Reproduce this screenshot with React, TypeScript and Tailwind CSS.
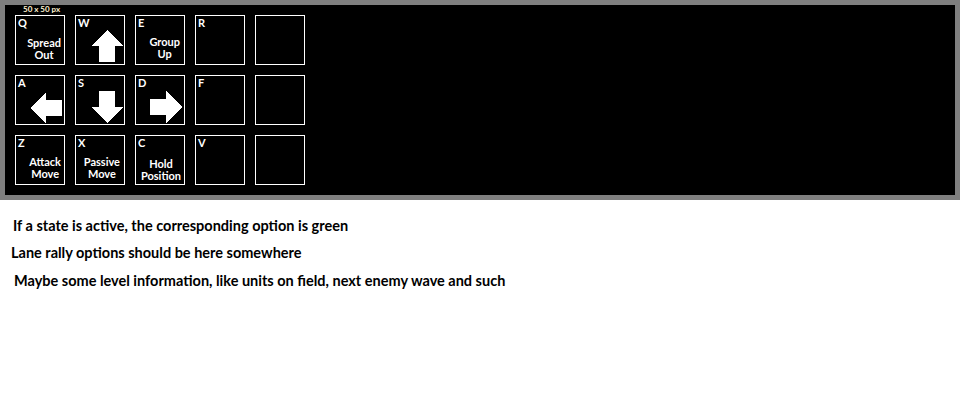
import React from 'react';

type Cell = {
  key: string;
  label?: string[];
  arrow?: 'up' | 'down' | 'left' | 'right';
  // spacing of the label block inside the cell
  pad?: string;
};

const rows: Cell[][] = [
  [
    { key: 'Q', label: ['Spread', 'Out'], pad: 'pr-[3px] pb-[3px]' },
    { key: 'W', arrow: 'up' },
    { key: 'E', label: ['Group', 'Up'], pad: 'pr-[4px] pb-[4px]' },
    { key: 'R' },
    { key: '' },
  ],
  [
    { key: 'A', arrow: 'left' },
    { key: 'S', arrow: 'down' },
    { key: 'D', arrow: 'right' },
    { key: 'F' },
    { key: '' },
  ],
  [
    { key: 'Z', label: ['Attack', 'Move'], pad: 'pr-[3px] pb-[4px]' },
    { key: 'X', label: ['Passive', 'Move'], pad: 'pr-[4px] pb-[4px]' },
    { key: 'C', label: ['Hold', 'Position'], pad: 'pr-[3px] pb-[2px]' },
    { key: 'V' },
    { key: '' },
  ],
];

// arrows are 32x32 blocks, drawn crisp like the mockup
const arrowPaths: Record<string, string> = {
  up: 'M16 0 L32 16 L24 16 L24 32 L8 32 L8 16 L0 16 Z',
  down: 'M8 0 L24 0 L24 16 L32 16 L16 32 L0 16 L8 16 Z',
  left: 'M0 16 L16 0 L16 8 L32 8 L32 24 L16 24 L16 32 Z',
  right: 'M0 8 L16 8 L16 0 L32 16 L16 32 L16 24 L0 24 Z',
};

const Arrow = ({ dir }: { dir: string }) => (
  <svg width="32" height="32" viewBox="0 0 32 32" shapeRendering="crispEdges">
    <path d={arrowPaths[dir]} fill="#fff" />
  </svg>
);

const arrowPad: Record<string, string> = {
  up: 'pl-[15px] pt-[3px]',
  down: 'pl-[15px] pt-[4px]',
  left: 'pl-[14px] pt-[5px]',
  right: 'pl-[14px] pt-[4px]',
};

const KeyCell = ({ cell }: { cell: Cell }) => (
  <div className="w-[50px] h-[50px] border border-white flex flex-col">
    <div className="h-[11px] pl-[2px] pt-[1px] text-[11px] font-bold leading-[11px] text-white">
      {cell.key}
    </div>
    {cell.arrow && (
      <div className={arrowPad[cell.arrow]}>
        <Arrow dir={cell.arrow} />
      </div>
    )}
    {cell.label && (
      <div
        className={`mt-auto self-end text-center text-[11px] font-bold leading-[12px] text-white ${cell.pad}`}
      >
        {cell.label.map((l) => (
          <div key={l}>{l}</div>
        ))}
      </div>
    )}
  </div>
);

export default function App() {
  return (
    <div className="w-[960px] h-[400px] bg-white font-['Lato',sans-serif]">
      <div className="border-[5px] border-[#7f7f7f] bg-black h-[200px] pl-[10px]">
        <div className="h-[10px] pl-[8px] text-[8px] font-bold leading-[9px] text-[#fff2d0]">
          50 x 50 px
        </div>
        <div className="flex flex-col gap-[10px]">
          {rows.map((row, i) => (
            <div key={i} className="flex gap-[10px]">
              {row.map((cell, j) => (
                <KeyCell key={j} cell={cell} />
              ))}
            </div>
          ))}
        </div>
      </div>
      <div className="pt-[17px] text-[14.5px] font-bold text-black leading-[18px]">
        <p className="pl-[13px]">If a state is active, the corresponding option is green</p>
        <p className="pl-[11px] mt-[9px]">Lane rally options should be here somewhere</p>
        <p className="pl-[14px] mt-[10px]">
          Maybe some level information, like units on field, next enemy wave and such
        </p>
      </div>
    </div>
  );
}
